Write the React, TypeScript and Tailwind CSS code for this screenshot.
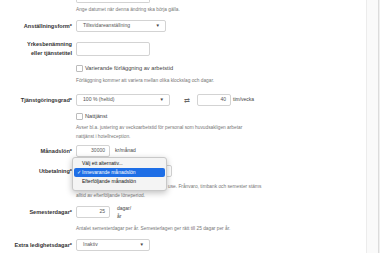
import type { ReactNode } from "react";

const font = { fontFamily: '"Liberation Sans", Arial, sans-serif' };

function Label({ children }: { children: ReactNode }) {
  return (
    <div className="w-[72px] shrink-0 text-right text-[5.6px] font-bold leading-[9px] text-[#333]">
      {children}
    </div>
  );
}

function Help({ children, className = "" }: { children: ReactNode; className?: string }) {
  return (
    <p className={`pl-[76px] text-[4.8px] leading-[9px] text-[#777] ${className}`}>
      {children}
    </p>
  );
}

function Select({ value, width }: { value: string; width: string }) {
  return (
    <div
      className={`flex h-[12px] ${width} items-center justify-between rounded-[2px] border border-[#d3d3d3] bg-white pl-[6px] pr-[5px] text-[5.1px] text-[#555]`}
    >
      <span>{value}</span>
      <span className="text-[4.5px] text-[#444]">▼</span>
    </div>
  );
}

function NumInput({ value, width = "w-[34px]" }: { value: string; width?: string }) {
  return (
    <div
      className={`flex h-[12px] ${width} items-center justify-end rounded-[2px] border border-[#d3d3d3] bg-white pr-[4px] text-[5px] text-[#555]`}
    >
      {value}
    </div>
  );
}

function Check({ label }: { label: string }) {
  return (
    <div className="flex h-[8px] items-center gap-[2px] pl-[76px] text-[5.7px] text-[#444]">
      <span className="h-[7px] w-[7px] rounded-[1px] border border-[#bcbcbc] bg-white" />
      <span>{label}</span>
    </div>
  );
}

export default function App() {
  return (
    <div className="flex h-[253px] w-[380px] overflow-hidden bg-white" style={font}>
      <div className="w-[367px] shrink-0 border-r border-[#ececec] bg-white">
        {/* tail of the date input above */}
        <div className="ml-[76px] h-[3px] w-[74px] rounded-b-[2px] border border-t-0 border-[#d3d3d3]" />
        <Help className="mt-[2px] leading-[7px]">Ange datumet när denna ändring ska börja gälla.</Help>

        <div className="mt-[6px] flex items-center gap-[4px]">
          <Label>Anställningsform*</Label>
          <Select value="Tillsvidareanställning" width="w-[90px]" />
        </div>

        <div className="mt-[8px] flex items-center gap-[4px]">
          <Label>
            Yrkesbenämning
            <br />
            eller tjänstetitel
          </Label>
          <div className="h-[14px] w-[74px] rounded-[2px] border border-[#d3d3d3] bg-white" />
        </div>

        <div className="mt-[6px]">
          <Check label="Varierande förläggning av arbetstid" />
        </div>
        <Help className="mt-[4px] leading-[7px]">
          Förläggning kommer att variera mellan olika klockslag och dagar.
        </Help>

        <div className="mt-[9px] flex items-center gap-[4px]">
          <Label>Tjänstgöringsgrad*</Label>
          <Select value="100 % (heltid)" width="w-[94px]" />
          <span className="ml-[10px] text-[7px] leading-none text-[#666]">⇄</span>
          <div className="ml-[3px]">
            <NumInput value="40" />
          </div>
          <span className="-ml-[2px] text-[5px] text-[#444]">tim/vecka</span>
        </div>

        <div className="mt-[6px]">
          <Check label="Nattjänst" />
        </div>
        <Help className="mt-[3px]">
          Avser bl.a. justering av veckoarbetstid för personal som huvudsakligen arbetar
          <br />
          nattjänst i hotellreception.
        </Help>

        <div className="mt-[4px] flex items-center gap-[4px]">
          <Label>Månadslön*</Label>
          <NumInput value="30000" />
          <span className="ml-[1px] text-[5px] text-[#444]">kr/månad</span>
        </div>

        <div className="mt-[8px] flex items-center gap-[4px]">
          <Label>Utbetalning*</Label>
          <div className="relative">
            <Select value="Innevarande månadslön" width="w-[96px]" />
            {/* open native select menu */}
            <div className="absolute -left-[4px] -top-[8px] z-10 w-[95px] rounded-[3px] border border-[#c8c8c8] bg-[#f4f4f4] pb-[4px] pt-[1px] text-[5px] text-[#111] shadow-[0_2px_6px_rgba(0,0,0,0.25)]">
              <div className="flex h-[9px] items-center pl-[9px]">Välj ett alternativ...</div>
              <div className="mx-[1px] flex h-[9px] items-center rounded-[2px] bg-[#1e6ee6] pl-[3px] text-white">
                <span className="w-[5px]">✓</span>
                <span>Innevarande månadslön</span>
              </div>
              <div className="flex h-[9px] items-center pl-[9px]">Efterföljande månadslön</div>
            </div>
          </div>
        </div>
        <Help className="mt-[5px]">
          <span className="inline-block w-[92px]" />
          use. Frånvaro, timbank och semester stäms
          <br />
          alltid av efterföljande löneperiod.
        </Help>

        <div className="mt-[4px] flex items-center gap-[4px]">
          <Label>Semesterdagar*</Label>
          <NumInput value="25" />
          <span className="ml-[3px] text-[5px] leading-[8px] text-[#444]">
            dagar/
            <br />
            år
          </span>
        </div>
        <Help className="mt-[4px] leading-[7px]">
          Antalet semesterdagar per år. Semesterlagen ger rätt till 25 dagar per år.
        </Help>

        <div className="mt-[6px] flex items-center gap-[4px]">
          <Label>Extra ledighetsdagar*</Label>
          <Select value="Inaktiv" width="w-[74px]" />
        </div>
      </div>
      <div className="flex flex-1 justify-end bg-[#fafafa]">
        <div className="w-[2px] border-l border-[#dcdcdc] bg-[#f0f0f0]" />
      </div>
    </div>
  );
}
